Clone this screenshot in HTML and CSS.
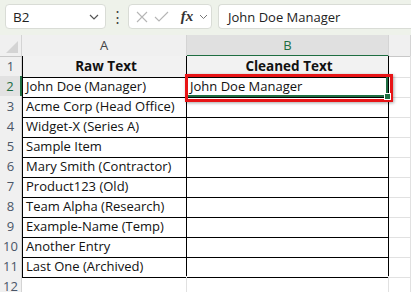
FILE: index.html
```html
<!DOCTYPE html>
<html lang="en">
<head>
  <meta charset="UTF-8">
  <title>Clean Text Sheet</title>
  <link rel="stylesheet" href="styles.css">
</head>
<body>
  <!-- Formula bar -->
  <div class="topbar">
    <div class="namebox">
      <span>B2</span>
      <svg width="10" height="6" viewBox="0 0 10 6"><polyline points="1,1 5,5 9,1" fill="none" stroke="#555" stroke-width="1.2"/></svg>
    </div>
    <div class="dots">&#8942;</div>
    <div class="fxbox">
      <svg class="ico" width="12" height="12" viewBox="0 0 12 12"><path d="M1 1 L11 11 M11 1 L1 11" stroke="#b5b5b5" stroke-width="1.1" fill="none"/></svg>
      <svg class="ico" width="15" height="11" viewBox="0 0 15 11"><polyline points="1,6 5,10 14,1" fill="none" stroke="#b5b5b5" stroke-width="1.1"/></svg>
      <span class="fx">fx</span>
      <svg width="9" height="6" viewBox="0 0 9 6"><polyline points="1,1 4.5,4.5 8,1" fill="none" stroke="#777" stroke-width="1"/></svg>
    </div>
    <div class="formula">John Doe Manager</div>
  </div>

  <!-- Grid -->
  <div class="sheet">
    <div class="row head">
      <div class="rh corner"><span class="tri"></span></div>
      <div class="ch">A</div>
      <div class="ch sel">B</div>
      <div class="ch"></div>
    </div>

    <div class="row">
      <div class="rh">1</div>
      <div class="cell box title first">Raw Text</div>
      <div class="cell box title">Cleaned Text</div>
      <div class="cell"></div>
    </div>
    <div class="row">
      <div class="rh sel">2</div>
      <div class="cell box first">John Doe (Manager)</div>
      <div class="cell box active">John Doe Manager<span class="handle"></span><span class="mark"></span></div>
      <div class="cell"></div>
    </div>
    <div class="row">
      <div class="rh">3</div>
      <div class="cell box first">Acme Corp (Head Office)</div>
      <div class="cell box"></div>
      <div class="cell"></div>
    </div>
    <div class="row">
      <div class="rh">4</div>
      <div class="cell box first">Widget-X (Series A)</div>
      <div class="cell box"></div>
      <div class="cell"></div>
    </div>
    <div class="row">
      <div class="rh">5</div>
      <div class="cell box first">Sample Item</div>
      <div class="cell box"></div>
      <div class="cell"></div>
    </div>
    <div class="row">
      <div class="rh">6</div>
      <div class="cell box first">Mary Smith (Contractor)</div>
      <div class="cell box"></div>
      <div class="cell"></div>
    </div>
    <div class="row">
      <div class="rh">7</div>
      <div class="cell box first">Product123 (Old)</div>
      <div class="cell box"></div>
      <div class="cell"></div>
    </div>
    <div class="row">
      <div class="rh">8</div>
      <div class="cell box first">Team Alpha (Research)</div>
      <div class="cell box"></div>
      <div class="cell"></div>
    </div>
    <div class="row">
      <div class="rh">9</div>
      <div class="cell box first">Example-Name (Temp)</div>
      <div class="cell box"></div>
      <div class="cell"></div>
    </div>
    <div class="row">
      <div class="rh">10</div>
      <div class="cell box first">Another Entry</div>
      <div class="cell box"></div>
      <div class="cell"></div>
    </div>
    <div class="row">
      <div class="rh">11</div>
      <div class="cell box first">Last One (Archived)</div>
      <div class="cell box"></div>
      <div class="cell"></div>
    </div>
    <div class="row">
      <div class="rh">12</div>
      <div class="cell"></div>
      <div class="cell"></div>
      <div class="cell"></div>
    </div>
  </div>
</body>
</html>
```

FILE: styles.css
```css
body {
  margin: 0;
  overflow: hidden;
  background: #ffffff;
  font-family: "Open Sans", "Noto Sans", sans-serif;
  color: #111;
}

/* formula bar */
.topbar {
  height: 35px;
  box-sizing: border-box;
  background: #eef2ea;
  display: flex;
  align-items: flex-start;
  padding: 4px 0 0 5px;
}

.namebox,
.fxbox,
.formula {
  height: 25px;
  box-sizing: border-box;
  background: #fff;
  border: 1px solid #d9dcd6;
  border-radius: 4px;
  display: flex;
  align-items: center;
}

.namebox {
  width: 101px;
  justify-content: space-between;
  padding: 0 6px 0 7px;
  font-size: 13.5px;
  color: #222;
}

.dots {
  width: 22px;
  text-align: center;
  font-size: 15px;
  line-height: 25px;
  color: #444;
}

.fxbox {
  width: 84px;
  padding: 0 3px 0 7px;
  justify-content: space-between;
}

.fx {
  font-family: "Liberation Serif", serif;
  font-style: italic;
  font-weight: bold;
  font-size: 15px;
  color: #333;
  margin-left: 6px;
}

.formula {
  flex: 1;
  margin-left: 6px;
  border-right: none;
  border-radius: 4px 0 0 4px;
  padding-left: 9px;
  font-size: 13px;
  color: #222;
}

/* grid */
.row {
  display: grid;
  grid-template-columns: 22px 165px 202px 1fr;
  height: 20px;
}

.row.head {
  height: 21px;
}

.rh {
  box-sizing: border-box;
  background: #f0f0f0;
  border-right: 1px solid #d4d4d4;
  border-bottom: 1px solid #e4e4e4;
  text-align: center;
  font-size: 13px;
  line-height: 21px;
  color: #4a5668;
}

.rh.sel {
  background: #e2e2e2;
  color: #1e6e42;
  border-right: 2px solid #1e6e42;
}

.corner {
  position: relative;
  border-bottom: 1px solid #c8c8c8;
}

.tri {
  position: absolute;
  right: 3px;
  bottom: 3px;
  width: 0;
  height: 0;
  border-left: 12px solid transparent;
  border-bottom: 12px solid #d4d4d4;
}

.ch {
  box-sizing: border-box;
  background: #f0f0f0;
  border-right: 1px solid #d4d4d4;
  border-bottom: 1px solid #c8c8c8;
  text-align: center;
  font-size: 13px;
  line-height: 20px;
  color: #444;
}

.ch.sel {
  background: #e0e0e0;
  color: #1e6e42;
  border-bottom: 2px solid #1e6e42;
}

.cell {
  box-sizing: border-box;
  border-right: 1px solid #e1e1e1;
  border-bottom: 1px solid #e1e1e1;
  font-size: 13px;
  line-height: 21px;
  padding-left: 3px;
  white-space: nowrap;
  overflow: hidden;
}

.cell.box {
  border-right-color: #000;
  border-bottom-color: #000;
}

.cell.first {
  border-left: 1px solid #000;
}

.cell.title {
  background: #f2f2f2;
  font-weight: bold;
  font-size: 13.5px;
  text-align: center;
}

/* selected cell with red highlight */
.cell.active {
  position: relative;
  overflow: visible;
  box-shadow: inset 0 -2px 0 #1e6e42, inset -2px 0 0 #1e6e42;
}

.handle {
  position: absolute;
  right: -3px;
  bottom: -3px;
  width: 5px;
  height: 5px;
  background: #1e6e42;
  border: 1px solid #fff;
  z-index: 3;
}

.mark {
  position: absolute;
  left: -2px;
  top: -2px;
  right: -5px;
  bottom: -5px;
  border: 3px solid #e81416;
  box-shadow: 1px 1px 3px rgba(0, 0, 0, 0.35);
  z-index: 2;
}
```
